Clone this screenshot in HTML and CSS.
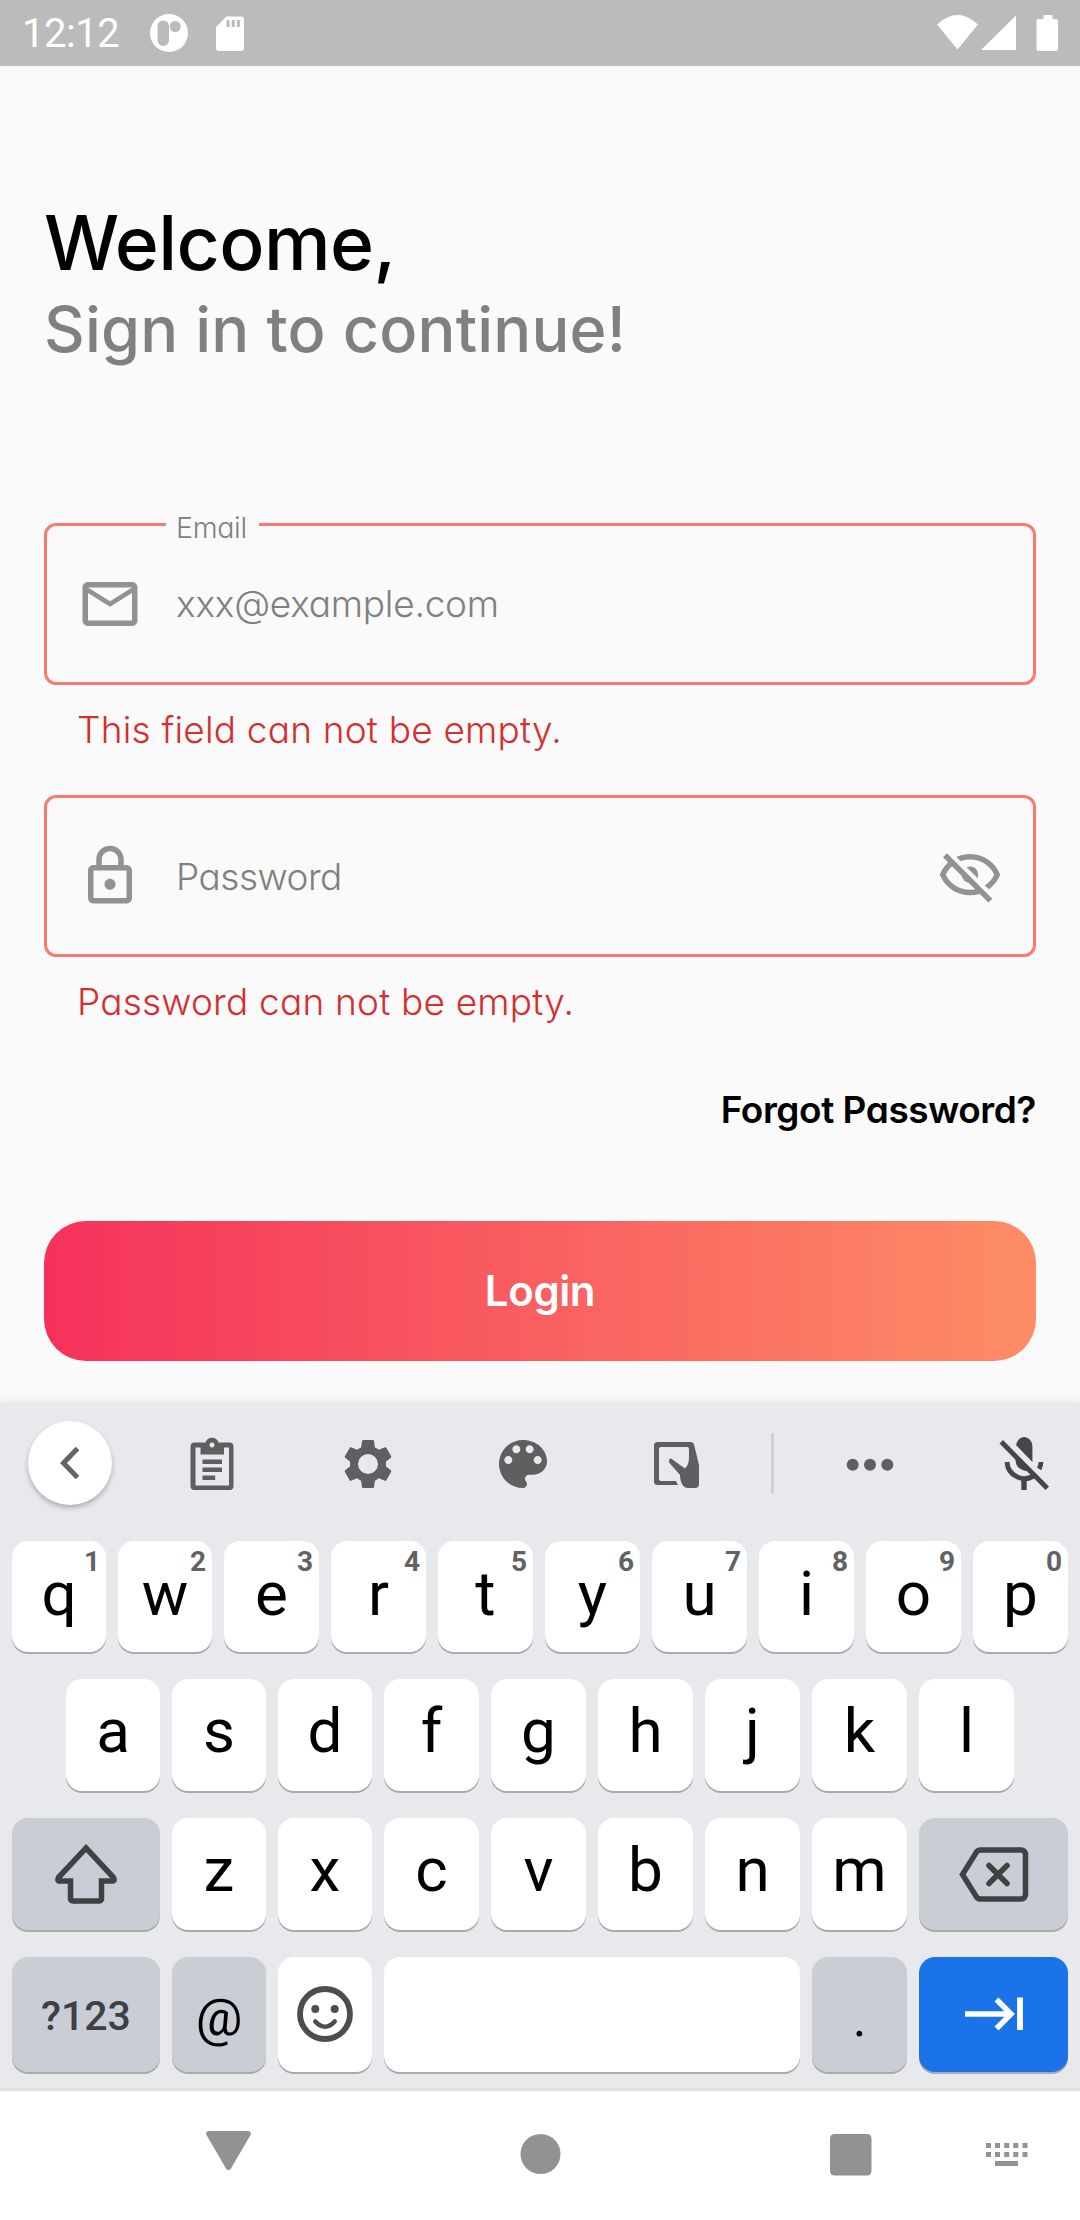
FILE: index.html
```html
<!DOCTYPE html>
<html lang="en">
<head>
<meta charset="utf-8">
<title>Sign in</title>
<link rel="stylesheet" href="styles.css">
</head>
<body>
<header class="status">
  <span class="clock">12:12</span>
  <svg class="st-app" width="38" height="38" viewBox="0 0 38 38"><circle cx="19" cy="19" r="19" fill="#fff"/><rect x="7.500" y="6.500" width="11.500" height="25.500" rx="5.750" fill="#bbb"/><circle cx="25.200" cy="12.500" r="5.500" fill="#bbb"/></svg>
  <svg class="st-sd" width="28" height="36" viewBox="0 0 28 36"><path d="M10.500 0.500H25a3 3 0 0 1 3 3V32a3 3 0 0 1-3 3H3a3 3 0 0 1-3-3V11z" fill="#fff"/><path d="M10.500 4h3v7h-3zM15.700 4h3v7h-3zM20.900 4h3v7h-3z" fill="#bbb"/></svg>
  <svg class="st-right" width="121" height="38" viewBox="0 0 121 38" fill="#fff"><path d="M0 10.500Q20.500-8.500 41 10.500L20.500 35.500z"/><path d="M79 1.500V36H44z"/><path d="M108 1h9v4h3.500a2 2 0 0 1 2 2V35a2 2 0 0 1-2 2H103a2 2 0 0 1-2-2V7a2 2 0 0 1 2-2h5z" transform="translate(-1.500)"/></svg>
</header>

<main class="login">
  <h1 class="title">Welcome,</h1>
  <p class="subtitle">Sign in to continue!</p>

  <div class="field">
    <span class="field-label">Email</span>
    <svg class="field-icon" width="66" height="66" viewBox="0 0 24 24"><path d="M22 6c0-1.100-.9-2-2-2H4c-1.100 0-2 .9-2 2v12c0 1.100.9 2 2 2h16c1.100 0 2-.9 2-2V6zm-2 0l-8 5-8-5h16zm0 12H4V8l8 5 8-5v10z"/></svg>
    <span class="field-text mail-text">xxx@example.com</span>
  </div>
  <p class="error err-mail">This field can not be empty.</p>

  <div class="field">
    <svg class="field-icon" width="66" height="66" viewBox="0 0 24 24"><path d="M18 8h-1V6c0-2.760-2.240-5-5-5S7 3.240 7 6v2H6c-1.100 0-2 .9-2 2v10c0 1.100.9 2 2 2h12c1.100 0 2-.9 2-2V10c0-1.100-.9-2-2-2zM9 6c0-1.660 1.340-3 3-3s3 1.340 3 3v2H9V6zm9 14H6V10h12v10zm-6-3c1.100 0 2-.9 2-2s-.9-2-2-2-2 .9-2 2 .9 2 2 2z"/></svg>
    <span class="field-text pass-text">Password</span>
    <svg class="field-eye" width="66" height="66" viewBox="0 0 24 24">
      <mask id="cut"><rect width="24" height="24" fill="#fff"/><path d="M1.750 1.550L23 22.800" stroke="#000" stroke-width="2.500"/></mask>
      <g mask="url(#cut)"><path fill-rule="evenodd" d="M1 11.500C2.730 7.110 7 4 12 4s9.270 3.110 11 7.500c-1.730 4.390-6 7.500-11 7.500S2.730 15.890 1 11.500zm2.180 0C4.830 14.870 8.210 17 12 17s7.170-2.130 8.820-5.500C19.170 8.130 15.790 6 12 6s-7.170 2.130-8.820 5.500z"/><circle cx="12" cy="11.500" r="3"/></g>
      <path d="M2.900 4.450L19.400 20.950" stroke="#929292" stroke-width="2"/>
    </svg>
  </div>
  <p class="error err-pass">Password can not be empty.</p>

  <a class="forgot">Forgot Password?</a>
  <button class="submit">Login</button>
</main>

<section class="keyboard">
  <div class="tools">
    <span class="back"><svg width="20" height="34" viewBox="0 0 20 34"><path d="M17.500 2.500L3.500 17L17.500 31.500" fill="none" stroke="#636466" stroke-width="5"/></svg></span>
    <svg width="60" height="60" viewBox="181.500 1433 60 60"><path fill-rule="evenodd" d="M194 1441.500H205a6.800 6.800 0 0 1 13 0H229a4 4 0 0 1 4 4V1485a4 4 0 0 1-4 4H194a4 4 0 0 1-4-4V1445.500a4 4 0 0 1 4-4zM195 1446.500V1484.500H228.500V1446.500H223.500V1453.500H200V1446.500zM211.500 1441.500a2.500 2.500 0 1 0 .01 0z"/><path d="M202 1458.500h19.500v4.500H202zM202 1466.500h19.500v4.500H202zM202 1474.500h12.700v4.500H202z"/></svg>
    <svg width="60" height="60" viewBox="0 0 24 24"><path d="M19.140 12.940c.04-.3.06-.61.06-.94 0-.32-.02-.64-.07-.94l2.030-1.580c.18-.14.23-.41.12-.61l-1.920-3.320c-.12-.22-.37-.29-.59-.22l-2.390.96c-.5-.38-1.030-.7-1.620-.94l-.36-2.540c-.04-.24-.24-.41-.48-.41h-3.840c-.24 0-.43.17-.47.41l-.36 2.540c-.59.24-1.130.57-1.620.94l-2.390-.96c-.22-.08-.47 0-.59.22L2.740 8.870c-.12.21-.08.47.12.61l2.030 1.580c-.05.3-.09.63-.09.94s.02.64.07.94l-2.030 1.580c-.18.14-.23.41-.12.61l1.920 3.320c.12.22.37.29.59.22l2.390-.96c.5.38 1.030.7 1.620.94l.36 2.540c.05.24.24.41.48.41h3.840c.24 0 .44-.17.47-.41l.36-2.540c.59-.24 1.130-.56 1.620-.94l2.390.96c.22.08.47 0 .59-.22l1.920-3.320c.12-.22.07-.47-.12-.61l-2.010-1.580zM12 16a4 4 0 1 1 0-8 4 4 0 0 1 0 8z"/></svg>
    <svg width="64" height="64" viewBox="0 0 24 24"><path d="M12 3c-4.970 0-9 4.030-9 9s4.030 9 9 9c.83 0 1.500-.67 1.500-1.500 0-.39-.15-.74-.39-1.010-.23-.26-.38-.61-.38-.99 0-.83.67-1.500 1.500-1.500H16c2.760 0 5-2.240 5-5 0-4.420-4.030-8-9-8zm-5.500 9c-.83 0-1.500-.67-1.500-1.500S5.670 9 6.500 9 8 9.670 8 10.500 7.330 12 6.500 12zm3-4C8.670 8 8 7.330 8 6.500S8.670 5 9.500 5s1.500.67 1.500 1.500S10.330 8 9.500 8zm5 0c-.83 0-1.500-.67-1.500-1.500S13.670 5 14.500 5s1.500.67 1.500 1.500S15.330 8 14.500 8zm3 4c-.83 0-1.500-.67-1.500-1.500S16.670 9 17.500 9s1.500.67 1.500 1.500-.67 1.500-1.500 1.500z"/></svg>
    <svg width="60" height="60" viewBox="647 1433 60 60"><path fill-rule="evenodd" d="M657.500 1441H691a3 3 0 0 1 3 2.500L699 1464V1483a4 4 0 0 1-4 4H688C683 1487 680 1481 680 1474L669.500 1462C668.500 1460 669 1457.500 671 1457.500L685 1467.500Q689 1464 689 1456V1448a2 2 0 0 0-2-2H661a2 2 0 0 0-2 2V1478a2 2 0 0 0 2 2H676L678 1484H657.500a3.500 3.500 0 0 1-3.500-3.500V1444.500a3.500 3.500 0 0 1 3.500-3.500z"/></svg>
    <span class="split"></span>
    <svg width="60" height="60" viewBox="0 0 60 60"><circle cx="12.700" cy="30.700" r="6"/><circle cx="30" cy="30.700" r="6"/><circle cx="47.300" cy="30.700" r="6"/></svg>
    <svg class="mic" width="60" height="60" viewBox="994 1433 60 60"><path d="M1016 1445.500a8.200 9.500 0 0 1 16.400 0V1461L1016 1444z"/><path d="M1015.500 1454L1030.500 1469.500Q1027 1470.500 1024 1469.500Q1015.500 1467 1015.500 1459z"/><path d="M1007 1461a17.500 17.500 0 0 0 28 13M1041 1461q-.2 4-1.800 7" fill="none" stroke="#444648" stroke-width="4.800"/><path d="M1021.300 1476h5.400v13h-5.400zM1003 1439l46 46.500-3.500 3.500-46-46.500z"/></svg>
  </div>

  <div class="row r1">
    <span class="key"><i>1</i>q</span><span class="key"><i>2</i>w</span><span class="key"><i>3</i>e</span><span class="key"><i>4</i>r</span><span class="key"><i>5</i>t</span><span class="key"><i>6</i>y</span><span class="key"><i>7</i>u</span><span class="key"><i>8</i>i</span><span class="key"><i>9</i>o</span><span class="key"><i>0</i>p</span>
  </div>
  <div class="row r2">
    <span class="key">a</span><span class="key">s</span><span class="key">d</span><span class="key">f</span><span class="key">g</span><span class="key">h</span><span class="key">j</span><span class="key">k</span><span class="key">l</span>
  </div>
  <div class="row r3">
    <span class="key alt"><svg width="66" height="66" viewBox="53 1840 66 66"><path d="M86 1847L113.500 1876.500Q115.500 1880 112 1880H101.500V1898a2 2 0 0 1-2 2H72.500a2 2 0 0 1-2-2V1880H60Q56.500 1880 58.500 1876.500z"/></svg></span><span class="key">z</span><span class="key">x</span><span class="key">c</span><span class="key">v</span><span class="key">b</span><span class="key">n</span><span class="key">m</span><span class="key alt"><svg width="72" height="66" viewBox="957 1843 72 66"><path d="M961.500 1876.500L975.500 1854Q977 1852 979.500 1852H1020a4.500 4.500 0 0 1 4.500 4.500V1896.500a4.500 4.500 0 0 1-4.500 4.500H979.500Q977 1901 975.500 1899z"/><path d="M988 1867.500l18 18M1006 1867.500l-18 18" stroke-linecap="round"/></svg></span>
  </div>
  <div class="row r4">
    <span class="key alt mode">?123</span><span class="key alt at">@</span><span class="key"><svg class="emoji" width="60" height="60" viewBox="-30 -30 60 60"><circle r="25" stroke-width="5.800"/><g class="dots"><circle cx="-9.700" cy="-5" r="4"/><circle cx="9.700" cy="-5" r="4"/></g><path d="M-9.700 7.500Q-5 12.700 0 12.700T9.700 7.500" stroke-width="4.600" stroke-linecap="round"/></svg></span><span class="key"></span><span class="key alt dot">.</span><span class="key go"><svg width="60" height="36" viewBox="963 1996 60 36"><path d="M964 2014H1011M995.500 1999.500L1010 2014L995.500 2028.500" stroke-width="5.500"/><path d="M1019 1997.500V2030" stroke-width="5.800"/></svg></span>
  </div>
</section>

<nav class="nav">
  <svg width="45" height="48" viewBox="206 2130 45 48"><path d="M209 2131H248Q252 2131.500 250.500 2135L231 2168.500Q228.500 2172 226 2168.500L206.500 2135Q205 2131.500 209 2131z"/></svg>
  <svg class="home" width="41" height="48" viewBox="0 0 41 48"><circle cx="20.500" cy="24" r="20"/></svg>
  <svg class="recent" width="42" height="48" viewBox="0 0 42 48"><rect y="4" width="41.500" height="41.500" rx="4.500"/></svg>
  <svg class="ime" width="42" height="48" viewBox="986 2130 42 48"><path d="M986 2143h5v5h-5zm9 0h5v5h-5zm9.200 0h5v5h-5zm9.100 0h5v5h-5zm9.200 0h5v5h-5zM986 2152h5v5h-5zm9 0h5v5h-5zm9.200 0h5v5h-5zm9.100 0h5v5h-5zm9.200 0h5v5h-5zM995 2161h23v5h-23z"/></svg>
</nav>
</body>
</html>
```
FILE: styles.css
```css
* { box-sizing: border-box; }
body { margin: 0; width: 1080px; height: 2220px; overflow: hidden; display: flex; flex-direction: column; background: #fafafa; font-family: Inter, "Open Sans", sans-serif; font-feature-settings: "cv11"; }
h1, p { margin: 0; }
svg { display: block; flex: none; }

.status { display: flex; align-items: flex-start; height: 66px; flex: none; padding-left: 22px; background: #bbb; }
.clock { width: 128px; font: 400 40px/67px Roboto, sans-serif; letter-spacing: -.5px; color: #fff; }
.st-app { margin-top: 14px; }
.st-sd { margin: 16px 0 0 28px; }
.st-right { margin: 14px 22px 0 auto; overflow: visible; }

.login { display: flex; flex-direction: column; height: 1337px; flex: none; padding: 133px 44px 0; }
.title { font-size: 75px; line-height: 88px; font-weight: 500; letter-spacing: -.6px; color: #000; white-space: nowrap; }
.subtitle { margin: 2px 0 154px; font-size: 63px; line-height: 80px; font-weight: 500; letter-spacing: .2px; color: #808080; white-space: nowrap; }
.field { position: relative; display: flex; align-items: center; height: 162px; flex: none; padding: 0 30px; border: 3px solid #f97a73; border-radius: 12px; }
.field-icon, .field-eye { fill: #929292; }
.field-eye { margin-left: auto; }
.field-text { margin-left: 33px; font-size: 37px; line-height: 44px; font-weight: 300; letter-spacing: -.25px; color: #808080; }
.pass-text { letter-spacing: -.5px; padding-top: 1px; }
.field-label { position: absolute; left: 119px; top: -14px; width: 93px; padding-left: 10px; background: #fafafa; font-size: 28.500px; line-height: 32px; font-weight: 300; letter-spacing: -.3px; color: #808080; }
.error { margin: 23px 0 43px 33px; font-size: 37px; line-height: 44px; font-weight: 300; letter-spacing: .2px; color: #d32f2f; white-space: nowrap; }
.err-pass { margin-bottom: 64px; }
.forgot { align-self: flex-end; font-size: 37px; line-height: 44px; font-weight: 600; letter-spacing: -.45px; color: #000; }
.submit { margin: 89px 0 0; height: 140px; padding: 0; border: 0; border-radius: 42px; background: linear-gradient(90deg, #f5315b, #fd8d66); color: #fff; font: 600 42px/140px Inter, sans-serif; letter-spacing: -.4px; }

.keyboard { height: 688px; flex: none; background: #e8e9ed; border-bottom: 3px solid #dfe0e0; box-shadow: 0 -2px 8px rgba(0, 0, 0, .09); }
.tools { display: grid; grid-template-columns: 139px 145px 167px 144px 164px 27px 167px 142px; align-items: center; justify-items: center; height: 120px; margin-bottom: 18px; fill: #5d5f61; }
.tools > svg { margin-top: 2px; }
.tools > .mic { fill: #444648; }
.back { display: flex; align-items: center; justify-content: center; width: 84px; height: 84px; border-radius: 50%; background: #fff; box-shadow: 0 3px 5px rgba(0, 0, 0, .25); }
.split { width: 3px; height: 61px; background: #cfd1d5; }
.row { display: grid; gap: 12px; padding-left: 12px; }
.r1 { grid-template-columns: 94px 94px repeat(8, 95px); height: 111px; margin-bottom: 27px; }
.r2 { grid-template-columns: repeat(3, 94px) repeat(6, 95px); height: 112px; padding-left: 66px; margin-bottom: 27px; }
.r3 { grid-template-columns: 148px 94px 94px repeat(5, 95px) 149px; height: 112px; margin-bottom: 27px; }
.r4 { grid-template-columns: 148px 94px 94px 416px 95px 149px; height: 115px; }
.key { position: relative; display: flex; align-items: center; justify-content: center; padding-bottom: 6px; border-radius: 16px; background: #fff; box-shadow: 0 2px 0 #a9aaac; font: 400 62px/72px Roboto, sans-serif; color: #000; }
.r2 .key, .r3 .key { padding-bottom: 8px; }
.key i { position: absolute; top: 5px; right: 6px; font: 700 28px/32px Roboto, sans-serif; color: #616264; }
.key svg { margin-top: 6px; fill: none; stroke: #404143; stroke-width: 5.500px; }
.key .emoji { margin-top: 4px; stroke: #4c4d4f; }
.key .dots { fill: #4c4d4f; stroke: none; }
.r3 .key svg { margin-top: 7px; }
.alt { background: #cacdd6; }
.mode { font-size: 41px; font-weight: 500; padding: 2px 0 0; color: #3f4042; }
.at { font-size: 52px; padding: 6px 0 0; }
.dot { font-size: 52px; padding: 9px 0 0; }
.go { background: #1a73e8; }
.key.go svg { stroke: #fff; margin-top: 5px; }

.nav { display: flex; flex: 1; padding: 39px 0 0 206px; background: #fff; fill: #929292; }
.home { margin-left: 269px; }
.recent { margin-left: 269px; }
.ime { margin-left: 114px; }
```
